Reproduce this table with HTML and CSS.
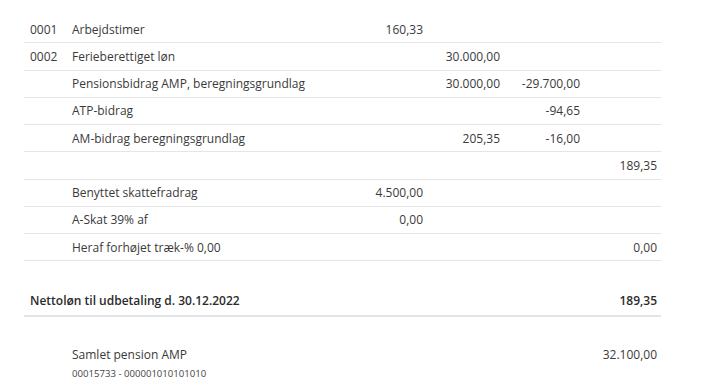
FILE: index.html
```html
<!DOCTYPE html>
<html lang="da">
<head>
<meta charset="utf-8">
<link rel="stylesheet" href="styles.css">
</head>
<body>
<div class="page">
  <table class="slip">
    <colgroup>
      <col class="c-code"><col class="c-label"><col class="c-num1"><col class="c-num2"><col class="c-num3"><col class="c-num4">
    </colgroup>
    <tbody>
      <tr class="line"><td class="code">0001</td><td class="label">Arbejdstimer</td><td class="num">160,33</td><td class="num"></td><td class="num"></td><td class="num"></td></tr>
      <tr class="line"><td class="code">0002</td><td class="label">Ferieberettiget løn</td><td class="num"></td><td class="num">30.000,00</td><td class="num"></td><td class="num"></td></tr>
      <tr class="line"><td class="code"></td><td class="label">Pensionsbidrag AMP, beregningsgrundlag</td><td class="num"></td><td class="num">30.000,00</td><td class="num">-29.700,00</td><td class="num"></td></tr>
      <tr class="line"><td class="code"></td><td class="label">ATP-bidrag</td><td class="num"></td><td class="num"></td><td class="num">-94,65</td><td class="num"></td></tr>
      <tr class="line"><td class="code"></td><td class="label">AM-bidrag beregningsgrundlag</td><td class="num"></td><td class="num">205,35</td><td class="num">-16,00</td><td class="num"></td></tr>
      <tr class="line"><td class="code"></td><td class="label"></td><td class="num"></td><td class="num"></td><td class="num"></td><td class="num">189,35</td></tr>
      <tr class="line"><td class="code"></td><td class="label">Benyttet skattefradrag</td><td class="num">4.500,00</td><td class="num"></td><td class="num"></td><td class="num"></td></tr>
      <tr class="line"><td class="code"></td><td class="label">A-Skat 39% af</td><td class="num">0,00</td><td class="num"></td><td class="num"></td><td class="num"></td></tr>
      <tr class="line"><td class="code"></td><td class="label">Heraf forhøjet træk-% 0,00</td><td class="num"></td><td class="num"></td><td class="num"></td><td class="num">0,00</td></tr>
      <tr class="net"><td class="code" colspan="2">Nettoløn til udbetaling d. 30.12.2022</td><td class="num"></td><td class="num"></td><td class="num"></td><td class="num">189,35</td></tr>
      <tr class="pension"><td class="code"></td><td class="label">Samlet pension AMP<div class="sub">00015733 - 000001010101010</div></td><td class="num"></td><td class="num"></td><td class="num"></td><td class="num">32.100,00</td></tr>
    </tbody>
  </table>
</div>
</body>
</html>
```

FILE: styles.css
```css
html, body {
  margin: 0;
  padding: 0;
  background: #ffffff;
}

body {
  font-family: "Open Sans", "Liberation Sans", sans-serif;
  font-size: 12px;
  color: #3a3a3a;
}

.page {
  padding: 16px 0 0 24px;
}

.slip {
  width: 637px;
  border-collapse: collapse;
  table-layout: fixed;
}

.c-code { width: 42px; }
.c-num1 { width: 80px; }
.c-num2 { width: 77px; }
.c-num3 { width: 80px; }
.c-num4 { width: 77px; }

.slip td {
  padding: 0 4px;
  white-space: nowrap;
  vertical-align: middle;
}

.slip td.code {
  padding-left: 6px;
}

.slip td.label {
  padding-left: 6px;
}

.slip td.num {
  text-align: right;
}

.line td {
  height: 26.25px;
  border-bottom: 1px solid #e6e6e6;
}

.net td {
  height: 30px;
  padding-top: 24px;
  border-bottom: 2px solid #e1e4e8;
  font-weight: 600;
  color: #2b2b2b;
}

.pension td {
  padding-top: 29px;
  vertical-align: top;
}

.sub {
  font-size: 9.6px;
  margin-top: 4px;
  color: #444;
}
```
